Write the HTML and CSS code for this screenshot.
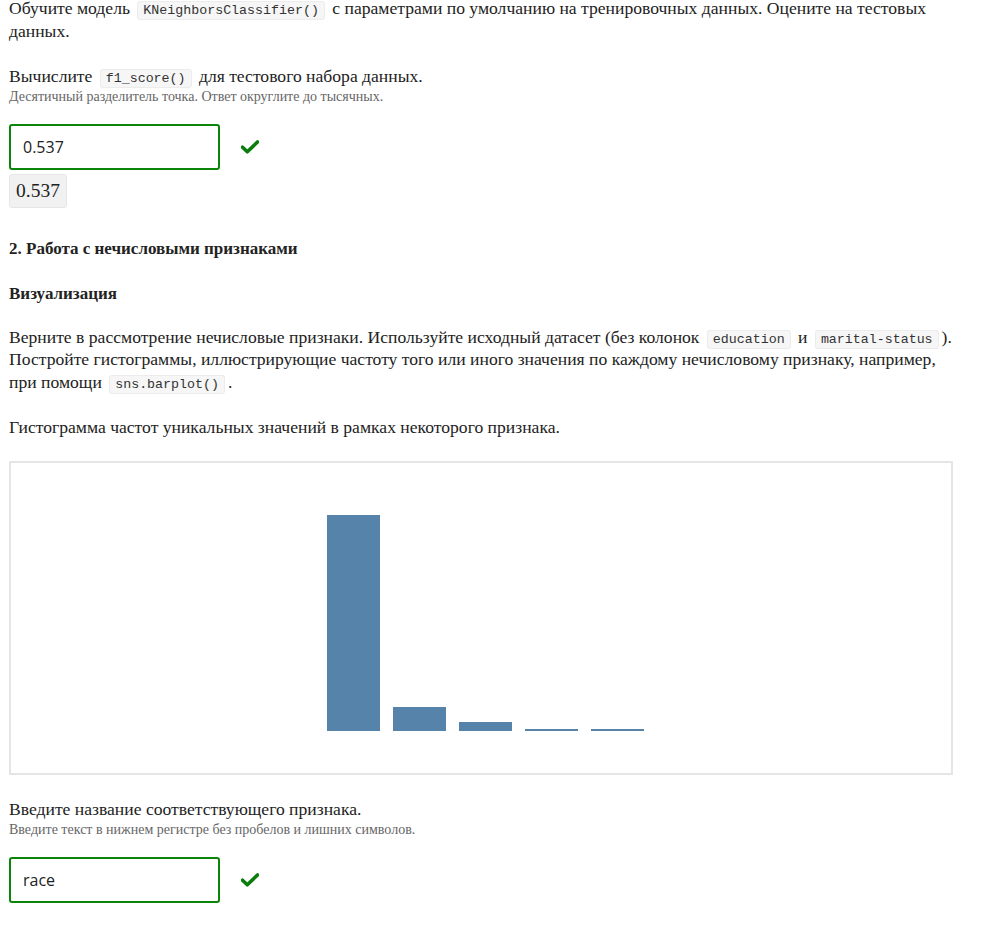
FILE: index.html
```html
<!DOCTYPE html>
<html lang="ru">
<head>
<meta charset="utf-8">
<link rel="stylesheet" href="styles.css">
</head>
<body>
<div class="page">
  <p class="para first">Обучите модель <code>KNeighborsClassifier()</code> с параметрами по умолчанию на тренировочных данных. Оцените на тестовых данных.</p>

  <div class="task">
    <p class="q">Вычислите <code>f1_score()</code> для тестового набора данных.</p>
    <p class="hint">Десятичный разделитель точка. Ответ округлите до тысячных.</p>
  </div>

  <div class="answer">
    <div class="input">0.537</div>
    <svg class="check" width="18" height="14" viewBox="0 0 18 14"><path d="M1.5 7.2 L6.3 11.8 L16.5 2" fill="none" stroke="#0a7d0a" stroke-width="3.6" stroke-linecap="round" stroke-linejoin="round"/></svg>
  </div>
  <div class="math">0.537</div>

  <h3 class="h">2. Работа с нечисловыми признаками</h3>
  <h4 class="h sub">Визуализация</h4>

  <p class="para">Верните в рассмотрение нечисловые признаки. Используйте исходный датасет (без колонок <code>education</code> и <code>marital-status</code>). Постройте гистограммы, иллюстрирующие частоту того или иного значения по каждому нечисловому признаку, например, при помощи <code>sns.barplot()</code>.</p>

  <p class="para">Гистограмма частот уникальных значений в рамках некоторого признака.</p>

  <div class="chart">
    <div class="bars">
      <div class="bar" style="height:216px"></div>
      <div class="bar" style="height:24px"></div>
      <div class="bar" style="height:9px"></div>
      <div class="bar" style="height:2px"></div>
      <div class="bar" style="height:2px"></div>
    </div>
  </div>

  <div class="task">
    <p class="q">Введите название соответствующего признака.</p>
    <p class="hint">Введите текст в нижнем регистре без пробелов и лишних символов.</p>
  </div>

  <div class="answer">
    <div class="input">race</div>
    <svg class="check" width="18" height="14" viewBox="0 0 18 14"><path d="M1.5 7.2 L6.3 11.8 L16.5 2" fill="none" stroke="#0a7d0a" stroke-width="3.6" stroke-linecap="round" stroke-linejoin="round"/></svg>
  </div>
</div>
</body>
</html>
```
FILE: styles.css
```css
html, body {
  margin: 0;
  padding: 0;
  background: #fff;
}
body {
  font-family: "Liberation Serif", "DejaVu Serif", serif;
  color: #222;
  font-size: 17.6px;
}
.page {
  width: 944px;
  padding: 0 0 0 9px;
}
.para {
  margin: 0 0 22.5px 0;
  line-height: 22.5px;
  font-size: 17.6px;
}
.para.first {
  margin-top: -3px;
}
code {
  font-family: "Liberation Mono", "DejaVu Sans Mono", monospace;
  font-size: 13.3px;
  line-height: 1;
  white-space: nowrap;
  color: #333;
  background: #f6f6f6;
  border: 1px solid #ececec;
  border-radius: 3px;
  padding: 1px 5px;
  margin: 0 3px;
}
.task {
  margin: 0 0 17px 0;
}
.q {
  margin: 0;
  font-size: 17.6px;
  line-height: 22px;
}
.hint {
  margin: 0;
  font-size: 14px;
  line-height: 20px;
  color: #666;
}
.answer {
  display: flex;
  align-items: center;
  gap: 21px;
}
.input {
  box-sizing: border-box;
  width: 211px;
  height: 46px;
  border: 2px solid #0a850a;
  border-radius: 3px;
  padding: 0 12px;
  display: flex;
  align-items: center;
  font-family: "Open Sans", "Liberation Sans", sans-serif;
  font-size: 16px;
  color: #222;
}
.math {
  display: inline-block;
  margin: 4px 0 0 0;
  padding: 3px 6px;
  background: #f1f1f1;
  border: 1px solid #e6e6e6;
  border-radius: 3px;
  font-family: "Liberation Serif", serif;
  font-size: 19.5px;
  line-height: 26px;
  color: #222;
}
.h {
  margin: 30px 0 0 0;
  font-size: 17px;
  font-weight: bold;
  line-height: 22px;
}
.sub {
  margin: 23px 0 21px 0;
}
.chart {
  box-sizing: border-box;
  width: 944px;
  height: 314px;
  border: 2px solid #e5e5e5;
  margin: 7px 0 23px 0;
  display: flex;
  align-items: flex-end;
}
.bars {
  display: flex;
  align-items: flex-end;
  gap: 13px;
  margin: 0 0 42px 316px;
}
.bar {
  width: 53px;
  background: #5683a9;
}
```
